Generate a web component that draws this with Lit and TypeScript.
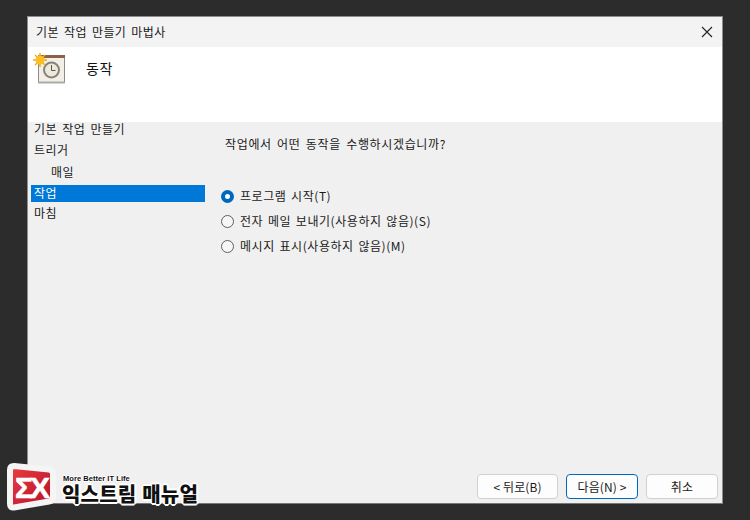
import { LitElement, html, css } from "lit";
import { customElement } from "lit/decorators.js";

@customElement("app-root")
export class AppRoot extends LitElement {
  static styles = css`
    :host { display: block; position: relative; width: 750px; height: 520px; background: #2c2c2c; overflow: hidden;
      font-family: "Noto Sans CJK KR", "Liberation Sans", sans-serif; font-size: 12px; color: #1a1a1a; }
    .page { padding: 16px 27px 16px 27px; height: 100%; box-sizing: border-box; }
    .win { height: 100%; box-sizing: border-box; border: 1px solid #8d8d8d; border-bottom-color: #777; background: #f0f0f0; display: flex; flex-direction: column; }
    .title { height: 30px; flex: none; background: #f3f3f3; display: flex; align-items: center; justify-content: space-between; padding: 0 9px 0 8px; letter-spacing: .4px; word-spacing: 2px; line-height: 1; }
    .title svg { display: block; }
    .head { height: 75px; flex: none; background: #fff; display: flex; align-items: flex-start; box-sizing: border-box; padding: 6px 0 0 5px; }
    .head .t { font-size: 14px; margin: 5px 0 0 19px; line-height: 20px; color: #111; letter-spacing: .6px; }
    .main { flex: 1; display: flex; min-height: 0; }
    .side { width: 177px; flex: none; padding: 0 0 0 3px; display: flex; flex-direction: column; box-sizing: border-box; }
    .it { height: 21px; line-height: 17px; padding-left: 3px; letter-spacing: .5px; word-spacing: 2px; flex: none; box-sizing: border-box; padding-top: 2px; }
    .it.first { height: 17px; padding-top: 0; line-height: 14px; }
    .it.sub { padding-left: 20px; height: 24px; padding-top: 3px; }
    .it.sel { height: 17px; padding-top: 0; margin-top: 1px; background: #0078d7; color: #fff; line-height: 15px; }
    .content { flex: 1; display: flex; flex-direction: column; padding: 14px 4px 4px 16px; min-width: 0; }
    .q { margin-left: 4px; letter-spacing: .65px; word-spacing: 2px; line-height: 16px; }
    .radios { margin-top: 35px; display: flex; flex-direction: column; gap: 7px; }
    .r { display: flex; align-items: center; gap: 5px; height: 18px; letter-spacing: .55px; word-spacing: 1.5px; line-height: 1; }
    .dot { width: 11px; height: 11px; border-radius: 50%; border: 1px solid #5f5f5f; background: #f6f6f6; box-sizing: content-box; flex: none; margin-right: 1px; }
    .dot.on { border: 4px solid #0067c0; width: 5px; height: 5px; background: #fff; }
    .btns { margin-top: auto; display: flex; justify-content: flex-end; gap: 8px; }
    .b { box-sizing: border-box; width: 81px; height: 25px; border: 1px solid #d0d0d0; border-radius: 4px; background: #fdfdfd; display: flex; align-items: center; justify-content: center; letter-spacing: .1px; line-height: 1; }
    .b.w { width: 72px; }
    .b.d { width: 72px; border-color: #0067c0; }
    .logo { position: absolute; left: 5px; top: 460px; width: 200px; height: 56px; }
    .mark { position: absolute; left: 0; top: 0; }
    .mark text { font: 700 30px "Liberation Sans", sans-serif; fill: #fff; letter-spacing: -3px; stroke: #fff; stroke-width: .6px; }
    .tag { position: absolute; left: 58px; top: 15px; color: #111; font: 700 7.5px/8px "Liberation Sans", sans-serif; letter-spacing: .05px; text-shadow: 1px 0 0 #fff, -1px 0 0 #fff, 0 1px 0 #fff, 0 -1px 0 #fff; white-space: nowrap; }
    .brand { position: absolute; left: 57px; top: 24px; color: #111; font: 900 20px/20px "Noto Sans CJK KR", sans-serif; letter-spacing: .2px; word-spacing: 1px; text-shadow: 1px 0 0 #fff, -1px 0 0 #fff, 0 1px 0 #fff, 0 -1px 0 #fff, 1px 1px 0 #fff, -1px -1px 0 #fff, 1px -1px 0 #fff, -1px 1px 0 #fff, 2px 0 0 #fff, -2px 0 0 #fff, 0 2px 0 #fff, 0 -2px 0 #fff; white-space: nowrap; }
  `;

  render() {
    return html`
      <div class="page">
        <div class="win">
          <div class="title">
            <span>기본 작업 만들기 마법사</span>
            <svg width="12" height="12" viewBox="0 0 12 12"><path d="M1 1l10 10M11 1L1 11" stroke="#222" stroke-width="1.1" fill="none"/></svg>
          </div>
          <div class="head">
            <svg width="34" height="32" viewBox="0 0 34 32">
              <rect x="5.5" y="2.5" width="26" height="27" fill="#f3efe6" stroke="#8f8a82"/>
              <rect x="6" y="2" width="26" height="3" fill="#8c5f4c"/>
              <path d="M5 29.5h27" stroke="#aaa" stroke-width="2"/>
              <circle cx="18.5" cy="17" r="7.5" fill="#eee9d8" stroke="#85857f" stroke-width="2"/>
              <path d="M18.5 12v5.500h4" stroke="#555" fill="none"/>
              <g stroke="#f0a818" stroke-width="1.4"><path d="M7 0v14M0 7h14M2 2l10 10M12 2L2 12"/></g>
              <circle cx="7" cy="7" r="4.500" fill="#fbbf24"/>
            </svg>
            <div class="t">동작</div>
          </div>
          <div class="main">
            <div class="side">
              <div class="it first">기본 작업 만들기</div>
              <div class="it">트리거</div>
              <div class="it sub">매일</div>
              <div class="it sel">작업</div>
              <div class="it">마침</div>
            </div>
            <div class="content">
              <div class="q">작업에서 어떤 동작을 수행하시겠습니까?</div>
              <div class="radios">
                <div class="r"><span class="dot on"></span>프로그램 시작(T)</div>
                <div class="r"><span class="dot"></span>전자 메일 보내기(사용하지 않음)(S)</div>
                <div class="r"><span class="dot"></span>메시지 표시(사용하지 않음)(M)</div>
              </div>
              <div class="btns">
                <div class="b">&lt; 뒤로(B)</div>
                <div class="b d">다음(N) &gt;</div>
                <div class="b w">취소</div>
              </div>
            </div>
          </div>
        </div>
      </div>
      <div class="logo">
        <svg class="mark" width="56" height="56" viewBox="0 0 56 56">
          <defs><linearGradient id="g" x1="0" y1="0" x2="1" y2="1"><stop offset="0" stop-color="#ee3d3f"/><stop offset="1" stop-color="#b0112b"/></linearGradient></defs>
          <path d="M9 6 L44 9.500 Q48 10 48 14 L48 37 Q48 41 44 41.500 L9 47.500 Q5 48 5 44 L5 10 Q5 6 9 6 Z" fill="url(#g)" stroke="#f5f5f5" stroke-width="6" stroke-linejoin="round"/>
          <text x="10" y="38">ΣX</text>
        </svg>
        <div class="tag">More Better IT Life</div>
        <div class="brand">익스트림 매뉴얼</div>
      </div>
    `;
  }
}
